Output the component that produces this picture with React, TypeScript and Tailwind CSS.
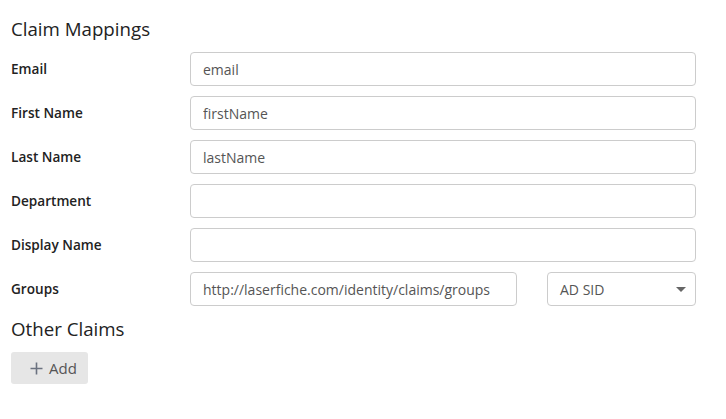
const rows = [
  { label: 'Email', value: 'email' },
  { label: 'First Name', value: 'firstName' },
  { label: 'Last Name', value: 'lastName' },
  { label: 'Department', value: '' },
  { label: 'Display Name', value: '' },
];

const inputCls =
  'h-[34px] rounded-[4px] border border-[#cccccc] bg-white px-3 text-[14px] text-[#555555] outline-none';

const App = () => {
  return (
    <div
      className="w-[726px] h-[419px] bg-white pl-[11px] pr-[30px] pt-[16px] text-[#222222]"
      style={{ fontFamily: '"Open Sans", sans-serif' }}
    >
      <h2 className="text-[18.7px] leading-[26px] font-normal mb-[10px]">Claim Mappings</h2>
      <div className="flex flex-col gap-[10px]">
        {rows.map((row) => (
          <div key={row.label} className="flex items-center">
            <label className="w-[179px] text-[13.6px] font-semibold">{row.label}</label>
            <input className={`${inputCls} w-[506px]`} defaultValue={row.value} />
          </div>
        ))}
        <div className="flex items-center">
          <label className="w-[179px] text-[13.6px] font-semibold">Groups</label>
          <input
            className={`${inputCls} w-[327px]`}
            defaultValue="http://laserfiche.com/identity/claims/groups"
          />
          <div className={`${inputCls} ml-[30px] w-[149px] flex items-center justify-between pr-[9px]`}>
            <span>AD SID</span>
            <span className="w-0 h-0 border-l-[5px] border-r-[5px] border-t-[5px] border-l-transparent border-r-transparent border-t-[#666666]" />
          </div>
        </div>
      </div>
      <h2 className="text-[18.7px] leading-[26px] font-normal mt-[10px] mb-[10px]">Other Claims</h2>
      <button className="h-[32px] w-[77px] rounded-[3px] bg-[#e6e6e6] flex items-center pl-[19px] gap-[6px] text-[15px] text-[#555555]">
        <svg width="13" height="13" viewBox="0 0 13 13" className="text-[#6b7280]">
          <path d="M6.5 0.5V12.5M0.5 6.5H12.5" stroke="currentColor" strokeWidth="1.6" />
        </svg>
        <span>Add</span>
      </button>
    </div>
  );
};

export default App;
